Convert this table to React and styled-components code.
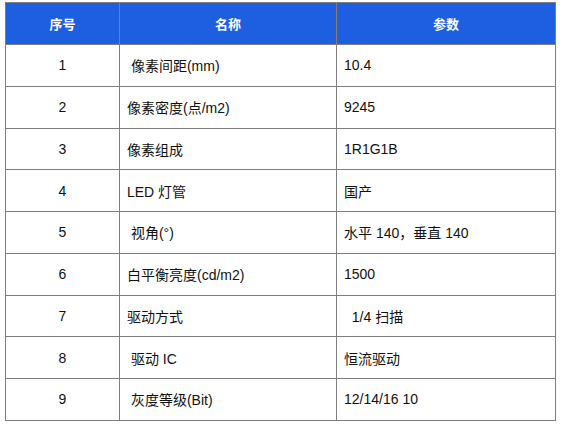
import React from 'react'
import styled, { createGlobalStyle } from 'styled-components'

const GlobalStyle = createGlobalStyle`
  html, body {
    margin: 0;
    padding: 0;
    background: #ffffff;
  }
  body {
    font-family: "Liberation Sans", "Noto Sans CJK SC", sans-serif;
  }
`

const Page = styled.div`
  padding: 2px 0 0 5px;
`

const Table = styled.table`
  border-collapse: collapse;
  table-layout: fixed;
  width: 550px;
  border: 1px solid #7f7f7f;
`

const HeadCell = styled.th`
  height: 41px;
  padding: 0;
  background: #1e5ee0;
  color: #ffffff;
  font-size: 13px;
  font-weight: bold;
  text-align: center;
  border: 1px solid #7f7f7f;
`

const Cell = styled.td`
  height: 40.75px;
  padding: 0 0 0 ${p => (p.$center ? 0 : 7)}px;
  color: #111111;
  font-size: 14px;
  text-align: ${p => (p.$center ? 'center' : 'left')};
  white-space: pre;
  border: 1px solid #7f7f7f;
`

const rows = [
  ['1', ' 像素间距(mm)', '10.4'],
  ['2', '像素密度(点/m2)', '9245'],
  ['3', '像素组成', '1R1G1B'],
  ['4', 'LED 灯管', '国产'],
  ['5', ' 视角(°)', '水平 140，垂直 140'],
  ['6', '白平衡亮度(cd/m2)', '1500'],
  ['7', '驱动方式', '  1/4 扫描'],
  ['8', ' 驱动 IC', '恒流驱动'],
  ['9', ' 灰度等级(Bit)', '12/14/16 10'],
]

const App = () => {
  return (
    <Page>
      <GlobalStyle />
      <Table>
        <colgroup>
          <col style={{ width: 114 }} />
          <col style={{ width: 217 }} />
          <col style={{ width: 219 }} />
        </colgroup>
        <thead>
          <tr>
            <HeadCell>序号</HeadCell>
            <HeadCell>名称</HeadCell>
            <HeadCell>参数</HeadCell>
          </tr>
        </thead>
        <tbody>
          {rows.map(r => (
            <tr key={r[0]}>
              <Cell $center>{r[0]}</Cell>
              <Cell>{r[1]}</Cell>
              <Cell>{r[2]}</Cell>
            </tr>
          ))}
        </tbody>
      </Table>
    </Page>
  )
}

export default App
